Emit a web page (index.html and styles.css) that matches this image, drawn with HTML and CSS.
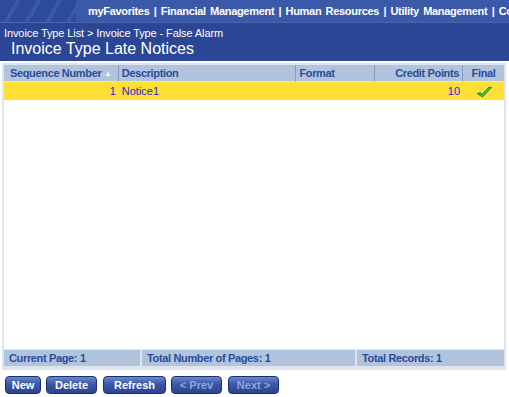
FILE: index.html
```html
<!DOCTYPE html>
<html>
<head>
<meta charset="utf-8">
<link rel="stylesheet" href="styles.css">
</head>
<body>
<div class="page">
  <div class="topbar">
    <div class="stripes"></div>
    <div class="nav">myFavorites | Financial Management | Human Resources | Utility Management | Co</div>
  </div>
  <div class="head">
    <div class="crumbs">Invoice Type List &gt; Invoice Type - False Alarm</div>
    <div class="title">Invoice Type Late Notices</div>
  </div>
  <div class="grid">
    <div class="table">
      <div class="row hdr">
        <div class="c c1">Sequence Number <span class="sort">▲</span></div>
        <div class="c c2">Description</div>
        <div class="c c3">Format</div>
        <div class="c c4 r">Credit Points</div>
        <div class="c c5 ctr">Final</div>
      </div>
      <div class="row data">
        <div class="c c1 r">1</div>
        <div class="c c2">Notice1</div>
        <div class="c c3"></div>
        <div class="c c4 r">10</div>
        <div class="c c5 ctr"><svg width="16" height="12" viewBox="0 0 16 12"><path d="M1 7.5 L4.5 6.5 L6 8.5 L13 1 L15.5 1.5 L6.5 11 Z" fill="#42c23c" stroke="#237a23" stroke-width="0.8" stroke-linejoin="round"/></svg></div>
      </div>
      <div class="empty"></div>
      <div class="row foot">
        <div class="f f1">Current Page: 1</div>
        <div class="f f2">Total Number of Pages: 1</div>
        <div class="f f3">Total Records: 1</div>
      </div>
    </div>
  </div>
  <div class="buttons">
    <span class="btn b-new">New</span>
    <span class="btn b-del">Delete</span>
    <span class="btn b-ref">Refresh</span>
    <span class="btn b-nav dis">&lt; Prev</span>
    <span class="btn b-nav dis">Next &gt;</span>
  </div>
</div>
</body>
</html>
```
FILE: styles.css
```css
html, body { margin: 0; padding: 0; background: #fff; }
body { font-family: "Liberation Sans", Arial, sans-serif; width: 509px; height: 397px; overflow: hidden; }
.page { width: 509px; }
.topbar { height: 22px; background: #3b59a9; display: flex; align-items: center; overflow: hidden; white-space: nowrap; }
.stripes { width: 76px; height: 22px; flex: none;
  background: repeating-linear-gradient(120deg, #2e4a9a 0 14px, #3b59a9 14px 18px); }
.nav { color: #fff; font-weight: bold; font-size: 11px; letter-spacing: -0.3px; word-spacing: 1.5px; padding-left: 12px; }
.head { background: #2b4695; padding: 4px 0 3px 0; color: #fff; border-top: 1px solid #4a66b2; }
.crumbs { font-size: 11px; letter-spacing: -0.1px; padding-left: 4px; line-height: 13px; }
.title { font-size: 16px; padding-left: 11px; line-height: 18px; }
.grid { padding: 2px 3px 0 2px; }
.table { border: 2px solid #dde4ee; height: 303px; display: flex; flex-direction: column; }
.row { display: flex; }
.c { font-size: 11px; line-height: 16px; padding: 0 3px; box-sizing: border-box; overflow: hidden; white-space: nowrap; }
.hdr .c { background: #b0c4de; color: #2d4b9a; font-weight: bold; letter-spacing: -0.35px; border-right: 1px solid #8a9cb8; border-bottom: 1px solid #dde4ee; height: 17px; }
.hdr .c1 { padding-left: 6px; }
.c1 { width: 115px; }
.c2 { width: 178px; }
.c3 { width: 79px; }
.c4 { width: 88px; }
.c5 { width: 41px; }
.hdr .c5 { border-right: none; }
.r { text-align: right; }
.ctr { text-align: center; }
.sort { color: #eef2f8; font-size: 8px; vertical-align: 1px; }
.data .c { background: #fee034; color: #3322cc; height: 18px; line-height: 18px; }
.data svg { vertical-align: middle; }
.empty { flex: 1; background: #fff; }
.foot { background: #dde4ee; padding: 1px 0 2px 0; }
.f { background: #b0c4de; color: #2d4b9a; font-weight: bold; font-size: 11px; letter-spacing: -0.35px; line-height: 16px; padding: 0 5px; border-right: 2px solid #dde4ee; box-sizing: border-box; }
.f1 { width: 138px; }
.f2 { width: 215px; }
.f3 { flex: 1; border-right: none; }
.buttons { display: flex; gap: 5px; padding: 6px 0 0 5px; }
.btn { display: inline-block; height: 18px; line-height: 16px; text-align: center; border-radius: 4px;
  background: linear-gradient(#6a86cc, #3a58a8 45%, #2a4592 100%); border: 1px solid #1b2f6e;
  color: #fff; font-weight: bold; font-size: 11px; box-sizing: border-box; }
.b-new { width: 36px; }
.b-del { width: 51px; }
.b-ref { width: 63px; margin-left: 1px; }
.b-nav { width: 51px; }
.b-nav + .b-nav { margin-left: 1px; }
.btn.dis { color: #93a6d6; }
```
